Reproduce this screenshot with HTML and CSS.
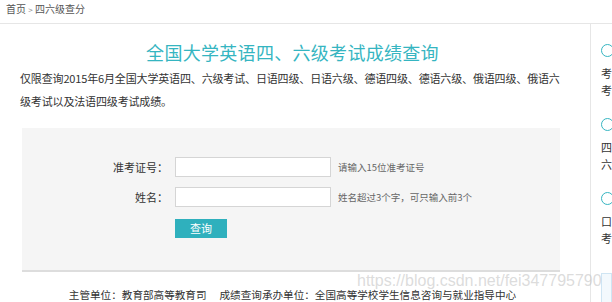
FILE: index.html
```html
<!DOCTYPE html>
<html lang="zh-CN">
<head>
    <meta charset="UTF-8">
    <title>四六级查分</title>
    <link rel="stylesheet" href="styles.css">
</head>
<body>
    <div class="crumb">首页 <span class="sep">&gt;</span> 四六级查分</div>

    <div class="page">
        <div class="main">
            <h1>全国大学英语四、六级考试成绩查询</h1>
            <p class="intro">仅限查询2015年6月全国大学英语四、六级考试、日语四级、日语六级、德语四级、德语六级、俄语四级、俄语六级考试以及法语四级考试成绩。</p>

            <form class="query">
                <label for="zkzh">准考证号：</label>
                <input type="text" id="zkzh">
                <span class="hint">请输入15位准考证号</span>

                <label for="xm">姓名：</label>
                <input type="text" id="xm">
                <span class="hint">姓名超过3个字，可只输入前3个</span>

                <span></span>
                <button type="button">查询</button>
            </form>

            <div class="footer">主管单位：教育部高等教育司　 成绩查询承办单位：全国高等学校学生信息咨询与就业指导中心</div>
            <div class="mark">https://blog.csdn.net/fei347795790</div>
        </div>

        <div class="side">
            <div class="side-head"><i class="ring"></i></div>
            <p>考试时间安排</p>
            <p>考生须知说明</p>
            <div class="side-head"><i class="ring"></i></div>
            <p>四级笔试成绩</p>
            <p>六级笔试成绩</p>
            <div class="side-head"><i class="ring"></i></div>
            <p>口试成绩查询</p>
            <p>考生成绩报告</p>
            <div class="side-box"></div>
        </div>
    </div>
</body>
</html>
```

FILE: styles.css
```css
body { margin: 0; font-family: "Noto Sans CJK SC", "Noto Sans", sans-serif; color: #333; background: #fff; width: 612px; overflow: hidden; }
.crumb { height: 23px; line-height: 17px; padding-left: 6px; font-size: 10px; color: #555; border-bottom: 1px solid #e6e6e6; }
.crumb .sep { font-size: 8px; color: #888; }

.page { display: flex; height: 278px; }
.main { position: relative; width: 545px; padding-left: 20px; padding-right: 25px; border-right: 1px solid #e6e6e6; flex: none; }
h1 { margin: 16px 0 0; font-size: 18px; line-height: 24px; font-weight: normal; color: #35b5c1; text-align: center; letter-spacing: 0.3px; }
.intro { margin: 3px -2px 0 0; font-size: 11px; line-height: 23px; color: #333; letter-spacing: -0.15px; }

.query { margin: 15px 0 0 2px; width: 538px; height: 113px; padding-top: 29px; background: #f5f5f5; border-bottom: 2px solid #ddd;
    display: grid; grid-template-columns: 146px 156px auto; grid-auto-rows: 20px; column-gap: 7px; row-gap: 10px; align-items: center; }
.query label { text-align: right; font-size: 11px; color: #333; }
.query input { box-sizing: border-box; width: 156px; height: 20px; margin: 0; border: 1px solid #d5d5d5; background: #fff; }
.query .hint { font-size: 9.5px; color: #666; }
.query button { margin-top: 2px; width: 52px; height: 19px; padding: 0; border: none; background: #2fb0bd; color: #fff; font-family: inherit; font-size: 11px; }

.footer { margin-top: 15px; font-size: 10.6px; line-height: 16px; text-align: center; color: #333; }
.mark { position: absolute; left: 357px; top: 248px; font-family: "Liberation Sans", sans-serif; font-size: 16px; color: rgba(190, 190, 190, 0.55); white-space: nowrap; }

.side { flex: 1; overflow: hidden; padding-left: 10px; font-size: 11px; white-space: nowrap; }
.side-head { display: flex; align-items: center; height: 10px; margin-top: 20px; }
.side .side-head:first-child { margin-top: 21px; }
.ring { display: block; box-sizing: border-box; flex: none; width: 13px; height: 13px; border: 1.5px solid #35b5c1; border-radius: 50%; }
.side p { margin: 0; line-height: 17px; color: #333; }
.side .side-head + p { margin-top: 10px; }
.side-box { margin-top: 26px; height: 40px; border: 1px solid #cfe5f3; background: #f3f9fd; }
```
